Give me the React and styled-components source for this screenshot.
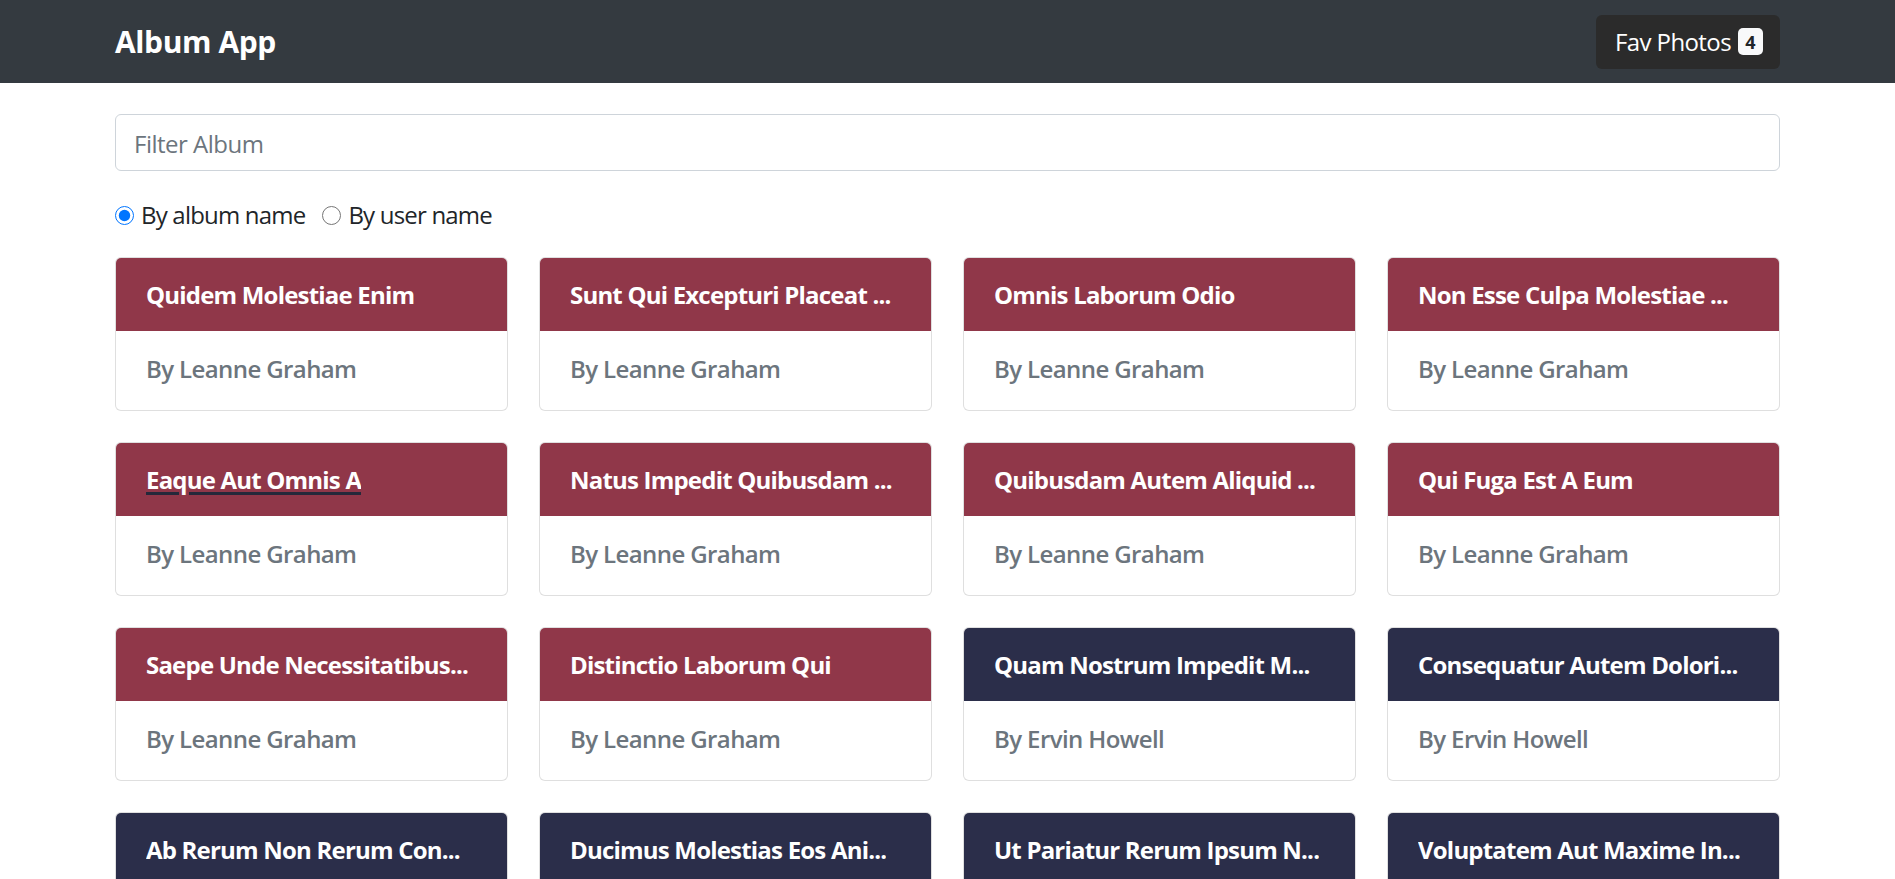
import React, { useState } from "react";
import styled, { createGlobalStyle } from "styled-components";

const GlobalStyle = createGlobalStyle`
  html, body { margin: 0; padding: 0; background: #fff; }
  body {
    font-family: "Open Sans", "Noto Sans", "Liberation Sans", sans-serif;
    font-size: 24px;
    line-height: 1.5;
    color: #212529;
  }
  * { box-sizing: border-box; }
`;

const NavBar = styled.nav`
  background: #343a40;
  height: 83px;
  display: flex;
  align-items: center;
`;

const Container = styled.div`
  width: 1665px;
  margin: 0 auto;
`;

const NavInner = styled(Container)`
  display: flex;
  align-items: center;
  justify-content: space-between;
`;

const Brand = styled.a`
  color: #fff;
  font-size: 30px;
  font-weight: 700;
  line-height: 45px;
  text-decoration: none;
  letter-spacing: -0.4px;
`;

const FavButton = styled.button`
  display: flex;
  align-items: center;
  gap: 7px;
  height: 54px;
  padding: 0 17px 0 19px;
  background: #2b2b2b;
  border: none;
  border-radius: 6px;
  color: #fff;
  font-family: inherit;
  font-size: 24px;
  letter-spacing: -0.6px;
  cursor: pointer;
`;

const Badge = styled.span`
  display: inline-flex;
  align-items: center;
  justify-content: center;
  width: 25px;
  height: 27px;
  border-radius: 5px;
  background: #f8f9fa;
  color: #212529;
  font-size: 18px;
  font-weight: 700;
  line-height: 1;
  letter-spacing: 0;
`;

const FilterInput = styled.input`
  display: block;
  width: 100%;
  height: 57px;
  margin-top: 31px;
  padding: 2px 18px 0;
  border: 1px solid #ced4da;
  border-radius: 6px;
  font-family: inherit;
  font-size: 24px;
  letter-spacing: -0.5px;
  color: #495057;
  outline: none;
  &::placeholder { color: #6c757d; }
`;

const RadioRow = styled.div`
  display: flex;
  align-items: center;
  gap: 17px;
  height: 36px;
  margin-top: 26px;
`;

const RadioLabel = styled.label`
  display: inline-flex;
  align-items: center;
  gap: 7px;
  font-size: 24px;
  line-height: 36px;
  letter-spacing: -0.8px;
  color: #212529;
  cursor: pointer;
`;

const Radio = styled.input`
  width: 19px;
  height: 19px;
  margin: 0;
`;

const Grid = styled.div`
  display: grid;
  grid-template-columns: repeat(4, 1fr);
  column-gap: 31px;
  row-gap: 31px;
  margin-top: 24px;
  padding-bottom: 40px;
`;

const Card = styled.div`
  border: 1px solid rgba(0, 0, 0, 0.125);
  border-radius: 6px;
  overflow: hidden;
  height: 154px;
  display: flex;
  flex-direction: column;
  background: #fff;
`;

const CardHeader = styled.div`
  background: ${(p) => p.$color};
  height: 73px;
  padding: 0 28px 0 30px;
  display: flex;
  align-items: center;
  flex-shrink: 0;
`;

const Title = styled.a`
  color: #fff;
  font-size: 24px;
  font-weight: 700;
  line-height: 36px;
  white-space: nowrap;
  overflow: hidden;
  text-overflow: clip;
  text-decoration: ${(p) => (p.$hover ? "underline" : "none")};
  text-decoration-color: #25283a;
  text-decoration-thickness: 3px;
  text-underline-offset: 3px;
  letter-spacing: -0.8px;
  cursor: pointer;
`;

const CardBody = styled.div`
  padding: 20px 30px 0;
`;

const Owner = styled.div`
  color: #6c757d;
  font-size: 24px;
  font-weight: 600;
  line-height: 36px;
  letter-spacing: -0.6px;
`;

const USERS = {
  1: { name: "Leanne Graham", color: "#903749" },
  2: { name: "Ervin Howell", color: "#2b2e4a" },
};

const ALBUMS = [
  { t: "Quidem Molestiae Enim", u: 1 },
  { t: "Sunt Qui Excepturi Placeat ...", u: 1 },
  { t: "Omnis Laborum Odio", u: 1 },
  { t: "Non Esse Culpa Molestiae ...", u: 1 },
  { t: "Eaque Aut Omnis A", u: 1, hover: true },
  { t: "Natus Impedit Quibusdam ...", u: 1 },
  { t: "Quibusdam Autem Aliquid ...", u: 1 },
  { t: "Qui Fuga Est A Eum", u: 1 },
  { t: "Saepe Unde Necessitatibus...", u: 1 },
  { t: "Distinctio Laborum Qui", u: 1 },
  { t: "Quam Nostrum Impedit M...", u: 2 },
  { t: "Consequatur Autem Dolori...", u: 2 },
  { t: "Ab Rerum Non Rerum Con...", u: 2 },
  { t: "Ducimus Molestias Eos Ani...", u: 2 },
  { t: "Ut Pariatur Rerum Ipsum N...", u: 2 },
  { t: "Voluptatem Aut Maxime In...", u: 2 },
];

export default function App() {
  const [mode, setMode] = useState("album");
  return (
    <>
      <GlobalStyle />
      <NavBar>
        <NavInner>
          <Brand>Album App</Brand>
          <FavButton>
            Fav Photos <Badge>4</Badge>
          </FavButton>
        </NavInner>
      </NavBar>
      <Container>
        <FilterInput placeholder="Filter Album" />
        <RadioRow>
          <RadioLabel>
            <Radio type="radio" name="mode" checked={mode === "album"} onChange={() => setMode("album")} />
            By album name
          </RadioLabel>
          <RadioLabel>
            <Radio type="radio" name="mode" checked={mode === "user"} onChange={() => setMode("user")} />
            By user name
          </RadioLabel>
        </RadioRow>
        <Grid>
          {ALBUMS.map((a, i) => (
            <Card key={i}>
              <CardHeader $color={USERS[a.u].color}>
                <Title $hover={a.hover}>{a.t}</Title>
              </CardHeader>
              <CardBody>
                <Owner>By {USERS[a.u].name}</Owner>
              </CardBody>
            </Card>
          ))}
        </Grid>
      </Container>
    </>
  );
}
